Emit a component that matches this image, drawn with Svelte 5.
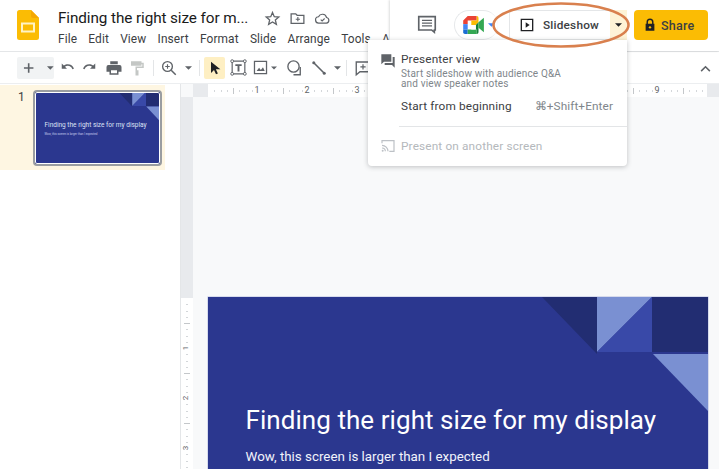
<script>
  const hTicks = Array.from({ length: 80 }, (_, i) => i);
  const hNums = [1, 2, 3, 9];
  const vTicks = Array.from({ length: 28 }, (_, i) => i);
  const vNums = [1, 2, 3];
  const menus = ['File', 'Edit', 'View', 'Insert', 'Format', 'Slide', 'Arrange', 'Tools', 'A'];
</script>

<div class="app">
  <header class="head">
    <svg class="logo" viewBox="0 0 22 30" width="22" height="30">
      <path d="M2.500 0H14l8 8v19.500a2.500 2.500 0 0 1-2.500 2.500h-17A2.500 2.500 0 0 1 0 27.500v-25A2.500 2.500 0 0 1 2.500 0z" fill="#fbbc04"/>
      <path d="M14 0l8 8h-6a2 2 0 0 1-2-2z" fill="#f5a800"/>
      <path d="M4 12.500h14v10H4zM6 14.500v6h10v-6z" fill="#fff3c4" fill-rule="evenodd"/>
    </svg>
    <div class="titles">
      <div class="titlerow">
        <span class="doc">Finding the right size for m...</span>
        <svg class="ico star" viewBox="0 0 24 24" width="17" height="17"><path d="M12 3.500l2.500 5.900 6.400.5-4.900 4.200 1.500 6.200L12 17l-5.500 3.300L8 14.100 3.100 9.900l6.400-.5z" fill="none" stroke="#5f6368" stroke-width="1.800"/></svg>
        <svg class="ico move" viewBox="0 0 24 24" width="17" height="17"><path d="M3 5.500h6.500l2 2H21v11.500H3z" fill="none" stroke="#5f6368" stroke-width="1.800"/><path d="M12.500 10v6M9.500 13h6" stroke="#5f6368" stroke-width="1.600"/></svg>
        <svg class="ico cloud" viewBox="0 0 24 24" width="17" height="17"><path d="M7 18.500a4.500 4.500 0 0 1-.6-9 6 6 0 0 1 11.300 1.100A4 4 0 0 1 17.500 18.500z" fill="none" stroke="#5f6368" stroke-width="1.700"/><path d="M9.500 13.500l2 2 3.500-3.500" fill="none" stroke="#5f6368" stroke-width="1.500"/></svg>
      </div>
      <nav class="menus">
        {#each menus as m}<span>{m}</span>{/each}
      </nav>
    </div>
  </header>

  <div class="toolbar">
    <div class="addgroup">
      <svg viewBox="0 0 12 12" width="12" height="12"><path d="M6 1v10M1 6h10" stroke="#5f6368" stroke-width="1.700"/></svg>
      <svg class="caret" viewBox="0 0 8 4" width="7" height="4"><path d="M0 0h8L4 4z" fill="#5f6368"/></svg>
    </div>
    <span class="cell first"><svg viewBox="0 0 24 24" width="18" height="18"><path d="M5 6v7h7l-2.700-2.700a6.500 6.500 0 0 1 10 3.200l1.900-.6A8.500 8.500 0 0 0 7.800 8.800z" fill="#5f6368"/></svg></span>
    <span class="cell"><svg viewBox="0 0 24 24" width="18" height="18"><path d="M19 6v7h-7l2.700-2.700a6.500 6.500 0 0 0-10 3.200l-1.900-.6a8.500 8.500 0 0 1 13.400-4.100z" fill="#5f6368"/></svg></span>
    <span class="cell"><svg viewBox="0 0 24 24" width="18" height="18"><path d="M7 3h10v4H7zM4.500 8h15A2.500 2.500 0 0 1 22 10.500V17h-4v4H6v-4H2v-6.500A2.500 2.500 0 0 1 4.500 8zM8 15v4h8v-4z" fill="#5f6368" fill-rule="evenodd"/></svg></span>
    <span class="cell"><svg viewBox="0 0 24 24" width="18" height="18"><path d="M4 3h14v6H4zM18 5h3v7h-9v3h2v7h-4V10h9V7h-1z" fill="#c4c7c5"/></svg></span>
    <i class="sep"></i>
    <span class="cell zoom"><svg viewBox="0 0 24 24" width="18" height="18"><circle cx="10" cy="10" r="6.500" fill="none" stroke="#5f6368" stroke-width="1.800"/><path d="M15 15l6 6" stroke="#5f6368" stroke-width="2"/><path d="M10 7v6M7 10h6" stroke="#5f6368" stroke-width="1.500"/></svg></span>
    <span class="mini"><svg viewBox="0 0 8 4" width="7" height="4"><path d="M0 0h8L4 4z" fill="#5f6368"/></svg></span>
    <i class="sep tight"></i>
    <span class="select"><svg viewBox="0 0 24 24" width="16" height="16"><path d="M6 2.500v17l4.500-4.500 3 6.500 2.800-1.300-3-6.200H20z" fill="#202124"/></svg></span>
    <span class="cell text"><svg viewBox="0 0 24 24" width="19" height="19"><path d="M4 4h16v16H4z" fill="none" stroke="#5f6368" stroke-width="1.500"/><path d="M8 8h8v2.200h-2.800V17h-2.400v-6.800H8z" fill="#5f6368"/><g fill="#fff" stroke="#5f6368" stroke-width="1.200"><circle cx="4" cy="4" r="1.800"/><circle cx="20" cy="4" r="1.800"/><circle cx="4" cy="20" r="1.800"/><circle cx="20" cy="20" r="1.800"/></g></svg></span>
    <span class="cell image"><svg viewBox="0 0 24 24" width="17" height="17"><path d="M3.500 3.500h17v17h-17z" fill="none" stroke="#5f6368" stroke-width="1.800"/><path d="M6.500 17l3.500-4.500 2.500 3 3-4 2.500 5.500z" fill="#5f6368"/></svg></span>
    <span class="mini img"><svg viewBox="0 0 8 4" width="7" height="4"><path d="M0 0h8L4 4z" fill="#5f6368"/></svg></span>
    <span class="cell shape"><svg viewBox="0 0 24 24" width="18" height="18"><circle cx="10" cy="10" r="7.500" fill="none" stroke="#5f6368" stroke-width="1.800"/><path d="M19 10.500V21H10" fill="none" stroke="#5f6368" stroke-width="1.800"/></svg></span>
    <span class="cell line"><svg viewBox="0 0 24 24" width="18" height="18"><path d="M5 5l14 14" stroke="#5f6368" stroke-width="2.200"/><circle cx="5" cy="5" r="2" fill="#5f6368"/><circle cx="19" cy="19" r="2" fill="#5f6368"/></svg></span>
    <span class="mini lineway"><svg viewBox="0 0 8 4" width="7" height="4"><path d="M0 0h8L4 4z" fill="#5f6368"/></svg></span>
    <i class="sep tight"></i>
    <span class="cell"><svg viewBox="0 0 24 24" width="18" height="18"><path d="M3 4h18v13H8l-5 4z" fill="none" stroke="#5f6368" stroke-width="1.800"/><path d="M12 7v7M8.500 10.500h7" stroke="#5f6368" stroke-width="1.600"/></svg></span>
  </div>

  <main class="main">
    <aside class="strip">
      <div class="active">
        <span class="num">1</span>
        <div class="thumb">
          <svg class="thumbart" viewBox="0 0 500 281" preserveAspectRatio="none">
            <path d="M334 0h55v57z" fill="#222d72"/><path d="M389 0h55l-55 55z" fill="#7a90d2"/><path d="M444 0v55h-55z" fill="#3949a8"/><path d="M444 0h56v55h-56z" fill="#222d72"/><path d="M445 57h55v57z" fill="#7a90d2"/>
          </svg>
          <div class="tt">Finding the right size for my display</div>
          <div class="ts">Wow, this screen is larger than I expected</div>
        </div>
      </div>
    </aside>

    <section class="canvas">
      <div class="rtop">
        <div class="corner"></div>
        <div class="gutter"></div>
        <div class="hruler">
          {#each hTicks as t}<i class="ht" class:long={t % 8 === 4} class:none={t % 8 === 0}></i>{/each}
          {#each hNums as n}<b class="hn" style="left:{n * 50 - 4}px">{n}</b>{/each}
        </div>
        <div class="gutter end"></div>
      </div>
      <div class="work">
        <div class="vcol">
          <div class="vgray"></div>
          <div class="vruler">
            {#each vTicks as t}<i class="vt" class:long={t % 8 === 4} class:none={t % 8 === 0}></i>{/each}
            {#each vNums as n}<b class="vn" style="top:{n * 50 - 4}px">{n}</b>{/each}
          </div>
        </div>
        <div class="stage">
          <div class="slide">
            <svg class="art" viewBox="0 0 500 173">
              <path d="M334 0h55v57z" fill="#222d72"/><path d="M389 0h55l-55 55z" fill="#7a90d2"/><path d="M444 0v55h-55z" fill="#3949a8"/><path d="M444 0h56v55h-56z" fill="#222d72"/><path d="M445 57h55v57z" fill="#7a90d2"/>
            </svg>
            <h1>Finding the right size for my display</h1>
            <p>Wow, this screen is larger than I expected</p>
          </div>
        </div>
      </div>
    </section>
  </main>

  <div class="panel">
    <svg class="comments" viewBox="0 0 24 24" width="22" height="22"><path d="M3 4h18v14.500h-1V21l-3-2.500H3z" fill="none" stroke="#5f6368" stroke-width="1.800"/><path d="M6.500 8h11M6.500 11h11M6.500 14h11" stroke="#5f6368" stroke-width="1.500"/></svg>
    <div class="meet">
      <svg viewBox="0 0 24 20" width="22" height="18">
        <path d="M5 0h10v5H5v4H0V5z" fill="#ea4335"/>
        <path d="M0 9h5v6H0z" fill="#4285f4"/>
        <path d="M0 15h5v5H2a2 2 0 0 1-2-2z" fill="#1a6dd4"/>
        <path d="M5 15h10v5H5z" fill="#34a853"/>
        <path d="M15 0a2 2 0 0 1 2 2v5l-3 3H9V5h6z" fill="#fbbc04"/>
        <path d="M14 10l3-3v11a2 2 0 0 1-2 2V15h-1z" fill="#188038"/>
        <path d="M9 10h5v5H9z" fill="#fff"/>
        <path d="M17 7l6-5v16l-6-5z" fill="#34a853"/>
      </svg>
      <svg class="mcaret" viewBox="0 0 8 4" width="7" height="4"><path d="M0 0h8L4 4z" fill="#4285f4"/></svg>
    </div>
    <button class="show">
      <svg viewBox="0 0 24 24" width="16" height="16"><path d="M3.500 3.500h17v17h-17z" fill="none" stroke="#202124" stroke-width="2"/><path d="M10 8l6 4-6 4z" fill="#202124"/></svg>
      <span>Slideshow</span>
    </button>
    <span class="showdrop"><svg viewBox="0 0 8 4" width="7" height="4"><path d="M0 0h8L4 4z" fill="#202124"/></svg></span>
    <button class="share">
      <svg viewBox="0 0 24 24" width="14" height="14"><path d="M6 10V7a6 6 0 0 1 12 0v3h1.500v12h-15V10zM8.500 10h7V7a3.500 3.500 0 0 0-7 0z" fill="#202124" fill-rule="evenodd"/><circle cx="12" cy="16" r="2" fill="#fbbc04"/></svg>
      <span>Share</span>
    </button>
  </div>

  <svg class="collapse" viewBox="0 0 12 8" width="11" height="7"><path d="M1 7l5-5 5 5" fill="none" stroke="#5f6368" stroke-width="1.800"/></svg>

  <div class="dropdown">
    <div class="row presenter">
      <svg viewBox="0 0 24 24" width="16" height="16"><path d="M2 2h15v11H6l-4 4z" fill="#5f6368"/><path d="M19 6h3v16l-4-4H7v-3h12z" fill="#5f6368"/></svg>
      <div>
        <div class="label">Presenter view</div>
        <div class="desc">Start slideshow with audience Q&amp;A<br />and view speaker notes</div>
      </div>
    </div>
    <div class="row begin">
      <span class="label">Start from beginning</span>
      <span class="key">⌘+Shift+Enter</span>
    </div>
    <div class="divider"></div>
    <div class="row another">
      <svg viewBox="0 0 24 24" width="16" height="16"><path d="M3 8V4h18v16h-7" fill="none" stroke="#bdc1c6" stroke-width="1.800"/><path d="M3 11a9 9 0 0 1 9 9M3 15a5 5 0 0 1 5 5" fill="none" stroke="#bdc1c6" stroke-width="1.800"/><circle cx="4" cy="19" r="1.500" fill="#bdc1c6"/></svg>
      <span>Present on another screen</span>
    </div>
  </div>

  <svg class="ring" viewBox="0 0 142 50" width="142" height="50"><ellipse cx="71" cy="25" rx="67.500" ry="21.500" fill="none" stroke="#d9804e" stroke-width="2.600"/></svg>
</div>

<style>
  :global(body) { margin: 0; background: #fff; }
  .app {
    position: relative;
    width: 719px;
    height: 469px;
    overflow: hidden;
    background: #fff;
    font-family: Roboto, "Liberation Sans", sans-serif;
    color: #202124;
    display: flex;
    flex-direction: column;
  }
  .head {
    height: 52px;
    flex: none;
    box-sizing: border-box;
    border-bottom: 1px solid #e4e6e8;
    display: flex;
    padding: 10px 0 0 17px;
    gap: 19px;
  }
  .logo { flex: none; }
  .titles { display: flex; flex-direction: column; margin-top: -2px; }
  .titlerow { display: flex; align-items: center; height: 20px; }
  .doc { font-size: 15.300px; letter-spacing: -0.100px; color: #1a1a1a; white-space: nowrap; width: 206px; }
  .ico { flex: none; }
  .move { margin-left: 7.500px; }
  .cloud { margin-left: 8px; }
  .menus { display: flex; gap: 11.300px; font-size: 11.900px; color: #3c4043; margin-top: 4px; letter-spacing: 0.100px; }

  .toolbar {
    height: 32px;
    flex: none;
    box-sizing: border-box;
    border-bottom: 1px solid #eceef0;
    display: flex;
    align-items: center;
    padding-left: 17px;
  }
  .addgroup {
    width: 37px;
    height: 22px;
    background: #f1f3f4;
    border-radius: 2px;
    display: flex;
    align-items: center;
    padding-left: 6px;
    box-sizing: border-box;
  }
  .caret { margin-left: 13px; }
  .cell { width: 23.500px; height: 22px; display: flex; align-items: center; justify-content: center; flex: none; }
  .cell.first { margin-left: 1px; }
  .sep { width: 1px; height: 16px; background: #e3e5e7; margin: 0 4px; flex: none; }
  .sep.tight { margin: 0 4px 0 3px; }
  .cell.zoom { width: 22px; }
  .mini { width: 16px; display: flex; justify-content: center; flex: none; }
  .select { width: 21px; height: 22px; background: #feefc3; display: flex; align-items: center; justify-content: center; flex: none; border-radius: 2px; }
  .cell.text { margin-left: 2px; width: 22px; }
  .cell.image { width: 22px; }
  .mini.img { width: 6px; margin-right: 6px; }
  .cell.shape { width: 24px; }
  .cell.line { width: 24px; }
  .mini.lineway { width: 12px; }

  .main { flex: 1; display: flex; min-height: 0; }
  .strip { width: 181px; flex: none; border-right: 1px solid #e4e6e8; box-sizing: border-box; }
  .active { height: 85px; margin-top: 1px; width: 165px; background: #fef6e2; position: relative; display: flex; padding: 5px 0 0 33px; box-sizing: border-box; }
  .num { position: absolute; left: 18px; top: 5px; font-size: 12px; color: #3c4043; }
  .thumb {
    width: 129px;
    height: 76px;
    box-sizing: border-box;
    border: 2.500px solid #9a9da1;
    border-radius: 4px;
    background: #2b378f;
    position: relative;
    overflow: hidden;
    padding: 29px 0 0 9.500px;
  }
  .thumb::after { content: ""; position: absolute; inset: 0; border: 1px solid #fff; border-radius: 2px; }
  .thumbart { position: absolute; inset: 0; width: 100%; height: 100%; }
  .tt { font-size: 6.500px; color: #dde2f5; white-space: nowrap; position: relative; line-height: 9px; }
  .ts { font-size: 2.900px; color: #c8cfee; white-space: nowrap; position: relative; margin-top: 2px; line-height: 5px; }

  .canvas { flex: 1; display: flex; flex-direction: column; min-width: 0; background: #f8f9fa; }
  .rtop { height: 13px; display: flex; flex: none; }
  .corner { width: 12px; background: #f8f9fa; flex: none; }
  .gutter { width: 15px; background: #e8eaed; flex: none; }
  .gutter.end { flex: 1; width: auto; }
  .hruler { width: 499px; background: #fff; position: relative; display: flex; align-items: center; overflow: hidden; flex: none; }
  .ht { width: 1px; margin-right: 5.250px; height: 2px; background: #d4d7da; flex: none; }
  .ht.long { height: 6px; background: #c4c7ca; }
  .ht.none { background: transparent; }
  .hn { position: absolute; top: 1px; font: 400 9px Roboto, sans-serif; color: #5f6368; background: #fff; width: 6px; text-align: center; line-height: 11px; }

  .work { flex: 1; display: flex; min-height: 0; }
  .vcol { width: 12px; flex: none; display: flex; flex-direction: column; }
  .vgray { height: 201px; background: #e8eaed; flex: none; }
  .vruler { flex: 1; background: #fff; position: relative; display: flex; flex-direction: column; align-items: center; overflow: hidden; }
  .vt { width: 2px; height: 1px; margin-bottom: 5.250px; background: #d4d7da; flex: none; }
  .vt.long { width: 6px; background: #c4c7ca; }
  .vt.none { background: transparent; }
  .vn { position: absolute; left: 3px; font: 400 8px Roboto, sans-serif; color: #5f6368; background: #fff; line-height: 8px; transform: rotate(-90deg); }
  .stage { flex: 1; padding: 199.500px 0 0 14.500px; }
  .slide {
    width: 500px;
    height: 173px;
    background: #2b378f;
    position: relative;
    box-sizing: border-box;
    padding: 107.500px 0 0 38px;
    box-shadow: 0 0 0 .5px #b6bedf;
    overflow: hidden;
  }
  .art { position: absolute; inset: 0; width: 500px; height: 173px; }
  .slide h1 { position: relative; margin: 0; font-size: 26px; font-weight: 400; color: #fff; line-height: 32px; white-space: nowrap; letter-spacing: 0.060px; }
  .slide p { position: relative; margin: 12px 0 0; font-size: 13.350px; font-weight: 400; color: #f1f3fb; line-height: 18px; white-space: nowrap; }

  .panel {
    position: absolute;
    left: 390px;
    top: 0;
    width: 329px;
    height: 51px;
    background: #fff;
    box-shadow: -1px 0 2px rgba(60, 64, 67, .18);
    display: flex;
    align-items: flex-start;
    padding: 10px 0 0 26px;
    box-sizing: border-box;
  }
  .comments { margin-top: 3px; margin-right: 16px; flex: none; }
  .meet {
    width: 44px;
    height: 30px;
    box-sizing: border-box;
    border: 1px solid #e6e8ea;
    border-right: none;
    border-radius: 15px;
    display: flex;
    align-items: center;
    padding-left: 8px;
    gap: 3px;
    flex: none;
  }
  .show {
    margin-left: 11px;
    width: 101px;
    height: 30px;
    border: 1px solid #e4e6e8;
    border-right: none;
    border-radius: 4px 0 0 4px;
    background: #fff;
    display: flex;
    align-items: center;
    padding: 0 0 0 9px;
    gap: 8px;
    font: 500 11.800px Roboto, sans-serif;
    color: #3c4043;
    letter-spacing: 0.200px;
    box-sizing: border-box;
    flex: none;
  }
  .showdrop { width: 17px; height: 30px; background: #fef3d6; display: flex; align-items: center; justify-content: center; flex: none; }
  .share {
    margin-left: 7px;
    width: 74px;
    height: 30px;
    border: none;
    border-radius: 4px;
    background: #fbbc04;
    display: flex;
    align-items: center;
    padding: 0 0 0 9px;
    gap: 4px;
    font: 500 12.500px Roboto, sans-serif;
    color: #3c4043;
    letter-spacing: 0.250px;
    box-sizing: border-box;
    flex: none;
  }
  .collapse { position: absolute; left: 700px; top: 65px; }

  .dropdown {
    position: absolute;
    left: 368px;
    top: 40px;
    width: 259px;
    height: 126px;
    background: #fff;
    border-radius: 0 0 4px 4px;
    box-shadow: 0 1px 5px rgba(60, 64, 67, .3);
    box-sizing: border-box;
    font-size: 11.800px;
  }
  .row { display: flex; }
  .presenter { padding: 12px 0 0 12px; gap: 5px; height: 45px; box-sizing: content-box; }
  .presenter svg { margin-top: 1px; flex: none; }
  .label { color: #3c4043; letter-spacing: 0.150px; line-height: 14px; }
  .desc { color: #80868b; font-size: 10px; line-height: 10px; margin-top: 3px; letter-spacing: 0.150px; }
  .begin { padding: 0 14px 0 33px; justify-content: space-between; height: 17px; align-items: center; }
  .key { color: #80868b; letter-spacing: 0.100px; }
  .divider { height: 1px; background: #e3e5e7; margin: 12px 0 0 31px; }
  .another { padding: 11px 0 0 12px; gap: 5px; color: #b4b8bc; align-items: center; letter-spacing: 0.150px; }

  .ring { position: absolute; left: 490px; top: 0; pointer-events: none; }
</style>
